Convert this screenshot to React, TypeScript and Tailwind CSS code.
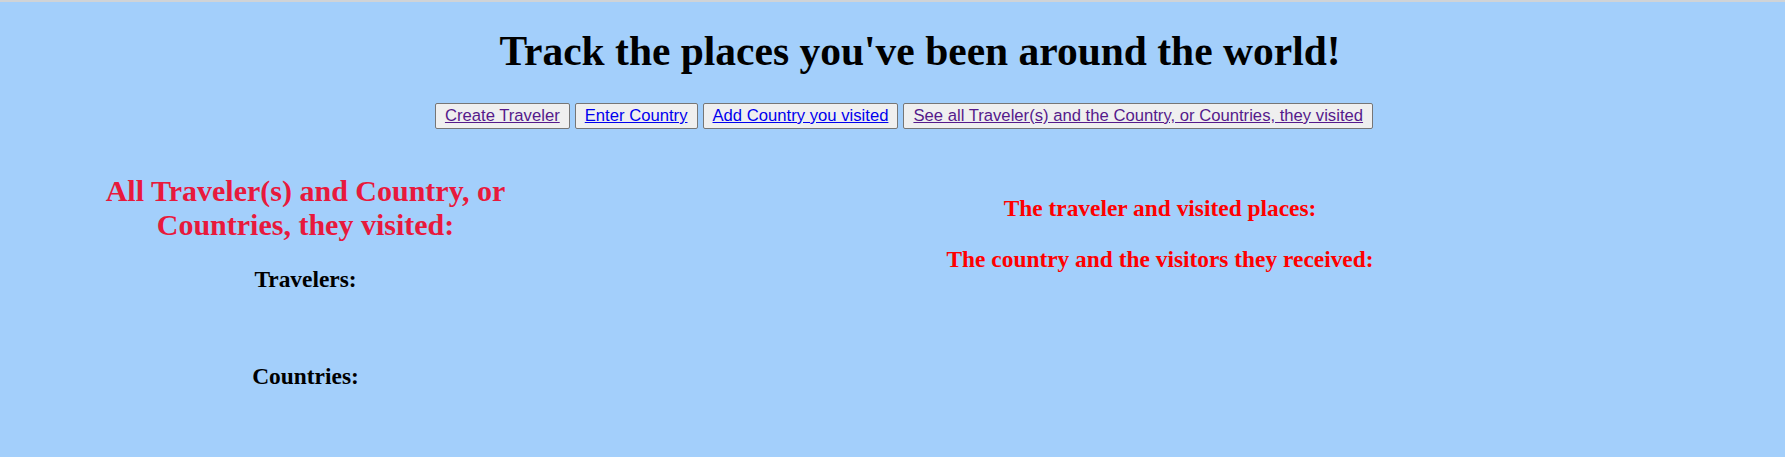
import React from "react";

const serif = { fontFamily: '"Liberation Serif", "Times New Roman", serif' };
const sans = { fontFamily: '"Liberation Sans", Arial, sans-serif' };

function NavButton({ label, visited }: { label: string; visited?: boolean }) {
  return (
    <button
      className={
        "h-[26px] px-[9px] py-[2px] bg-[#efefef] border border-[#767676] rounded-[2px] text-[16.67px] leading-[20px] underline " +
        (visited ? "text-[#551a8b]" : "text-[#0000ee]")
      }
      style={sans}
    >
      {label}
    </button>
  );
}

export default function App() {
  return (
    <div className="min-h-screen bg-[#a3cffb]" style={serif}>
      <div className="h-[2px] bg-[#d0d3d6]" />
      <h1 className="mt-[26px] pl-[55px] text-center text-[41.5px] leading-[46px] font-bold text-black">
        Track the places you've been around the world!
      </h1>
      <div className="mt-[29px] pl-[23px] flex justify-center gap-[5px]">
        <NavButton label="Create Traveler" visited />
        <NavButton label="Enter Country" />
        <NavButton label="Add Country you visited" />
        <NavButton label="See all Traveler(s) and the Country, or Countries, they visited" visited />
      </div>
      <div className="flex px-[10px]">
        <div className="w-[591px] px-[45px] text-center">
          <h2 className="mt-[45px] text-[30px] leading-[34px] font-bold text-[#e8193c]">
            All Traveler(s) and Country, or Countries, they visited:
          </h2>
          <h3 className="mt-[24px] text-[23.4px] leading-[27px] font-bold text-black">Travelers:</h3>
          <h3 className="mt-[70px] text-[23.4px] leading-[27px] font-bold text-black">Countries:</h3>
        </div>
        <div className="w-[1118px] text-center">
          <h3 className="mt-[66px] text-[23.4px] leading-[27px] font-bold text-[#ff0000]">
            The traveler and visited places:
          </h3>
          <h3 className="mt-[24px] text-[23.4px] leading-[27px] font-bold text-[#ff0000]">
            The country and the visitors they received:
          </h3>
        </div>
      </div>
    </div>
  );
}
